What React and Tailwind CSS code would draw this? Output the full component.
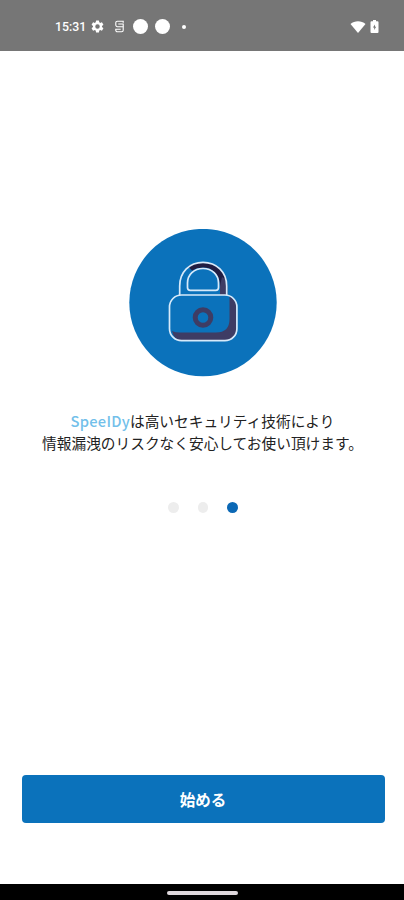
import React from 'react';

const TOTAL_SLIDES = 3;

const StatusBar = () => (
  <header className="flex h-[51px] shrink-0 items-center justify-between bg-[#767676] pl-[55px] pr-[25px] pt-[2px] text-white">
    <div className="flex items-center">
      <span className="w-[31px] whitespace-nowrap pt-[2px] font-[Roboto,sans-serif] text-[12.3px] font-medium leading-none">
        15:31
      </span>
      <svg className="ml-[4px] size-[15px]" viewBox="0 0 24 24" fill="currentColor">
        <path d="M19.14 12.94c.04-.3.06-.61.06-.94s-.02-.64-.07-.94l2.03-1.58a.49.49 0 0 0 .12-.61l-1.92-3.32a.49.49 0 0 0-.59-.22l-2.39.96a7 7 0 0 0-1.62-.94l-.36-2.54a.48.48 0 0 0-.48-.41h-3.84a.47.47 0 0 0-.47.41l-.36 2.54c-.59.24-1.13.57-1.62.94l-2.39-.96a.48.48 0 0 0-.59.22L2.74 8.87a.48.48 0 0 0 .12.61l2.03 1.58c-.05.3-.09.63-.09.94s.02.64.07.94l-2.03 1.58a.49.49 0 0 0-.12.61l1.92 3.32c.12.22.37.29.59.22l2.39-.96c.5.38 1.03.7 1.62.94l.36 2.54c.05.24.24.41.48.41h3.84c.24 0 .44-.17.47-.41l.36-2.54a7 7 0 0 0 1.62-.94l2.39.96c.22.08.47 0 .59-.22l1.92-3.32a.47.47 0 0 0-.12-.61zM12 15.6a3.6 3.6 0 1 1 0-7.2 3.6 3.6 0 0 1 0 7.2z" />
      </svg>
      <svg className="ml-[9px] h-[13px] w-[11px]" viewBox="0 0 11 14" fill="none" stroke="currentColor" strokeWidth="1.2">
        <path d="M9.500 3V1.300H3.200A1.700 1.700 0 0 0 1.500 3v2.500A1.700 1.700 0 0 0 3.200 7.200H9.500V11a1.700 1.700 0 0 1-1.700 1.700H3.200A1.700 1.700 0 0 1 1.500 11V9.900H6.800" />
        <path d="M9.500 7.200V4.300H4.200" />
      </svg>
      <span className="ml-[8px] size-[15px] rounded-full bg-white" />
      <span className="ml-[7px] size-[15px] rounded-full bg-white" />
      <span className="ml-[12px] size-[4px] rounded-full bg-white" />
    </div>
    <div className="flex items-center">
      <svg className="h-[12px] w-[16px]" viewBox="0 0 16 12" fill="currentColor">
        <path d="M.5 3C4.600-.6 11.400-.6 15.500 3L8 12z" />
      </svg>
      <svg className="ml-[4px] h-[13px] w-[9px]" viewBox="0 0 9 13">
        <path d="M3 0h3v1.300h1.500q1 0 1 1V12q0 1-1 1h-6q-1 0-1-1V2.300q0-1 1-1H3z" fill="currentColor" />
        <path d="M5 4.500 2.900 7.600h1.300V10l2-3.300H5z" fill="#767676" />
      </svg>
    </div>
  </header>
);

const LockIllustration = () => (
  <svg className="ml-[2px] mt-[178px] size-[148px]" viewBox="129 229 148 148" fill="none">
    <circle cx="203" cy="302.600" r="73.700" fill="#0b72bb" />
    {/* shackle shade */}
    <path
      d="M188 266.500Q195 262 203 262C217 262 227.300 272 227.300 286V295H220V286C220 275 213 267.500 203 267.500Q197 267.500 192 270.500Z"
      fill="#211d42"
    />
    <path d="M222 277Q227.300 279 227.300 287V295H220V286Z" fill="#3e3c64" />
    {/* body shade */}
    <path
      d="M229.500 296.500Q236.500 300 236.500 307V328Q236.500 340.500 224 340.500H182Q174 340.500 172 331Q175 332.500 180 332.500H216Q229.500 332.500 229.500 319Z"
      fill="#3e3c64"
    />
    <g stroke="#d7eafa" strokeWidth="1.700">
      <path d="M179.700 295V286C179.700 272 189.500 262.300 203 262.300S226.700 272 226.700 286V295" />
      <path d="M187.500 287.500V283C187.500 274.500 194 268.500 203 268.500S218.500 274.500 218.500 283V287.500Q218.500 290.300 215.700 290.300H190.300Q187.500 290.300 187.500 287.500Z" />
      <rect x="169.500" y="295" width="67.400" height="45.700" rx="12" />
    </g>
    <circle cx="203" cy="317.500" r="7.800" stroke="#3e3c64" strokeWidth="5" />
  </svg>
);

const PageDots = ({ active }) => (
  <div className="ml-[2px] mt-[49px] flex gap-[19px]">
    {Array.from({ length: TOTAL_SLIDES }, (_, i) => (
      <span
        key={i}
        className={`size-[10.500px] rounded-full ${i === active ? 'bg-[#0b68b5]' : 'bg-[#ededed]'}`}
      />
    ))}
  </div>
);

const App = () => {
  return (
    <div className="flex h-[900px] w-[404px] flex-col overflow-hidden bg-white font-['Noto_Sans_CJK_JP',sans-serif]">
      <StatusBar />

      <main className="flex flex-1 flex-col items-center">
        <LockIllustration />
        <p className="ml-[1px] mt-[33px] whitespace-nowrap text-center text-[14.700px] leading-[21.500px] text-[#222]">
          <span className="font-medium tracking-[0.250px] text-[#72bfea]">SpeeIDy</span>
          は高いセキュリティ技術により
          <br />
          情報漏洩のリスクなく安心してお使い頂けます。
        </p>
        <PageDots active={2} />
        <button className="mb-[61px] ml-[2px] mt-auto h-[48px] w-[363px] rounded-[4px] bg-[#0b72bb] pt-[2px] text-[15.500px] font-bold text-white">
          始める
        </button>
      </main>

      <footer className="flex h-[16px] shrink-0 items-center justify-center bg-black pt-[2px]">
        <span className="h-[4px] w-[71px] rounded-full bg-[#ded8dc]" />
      </footer>
    </div>
  );
};

export default App;
